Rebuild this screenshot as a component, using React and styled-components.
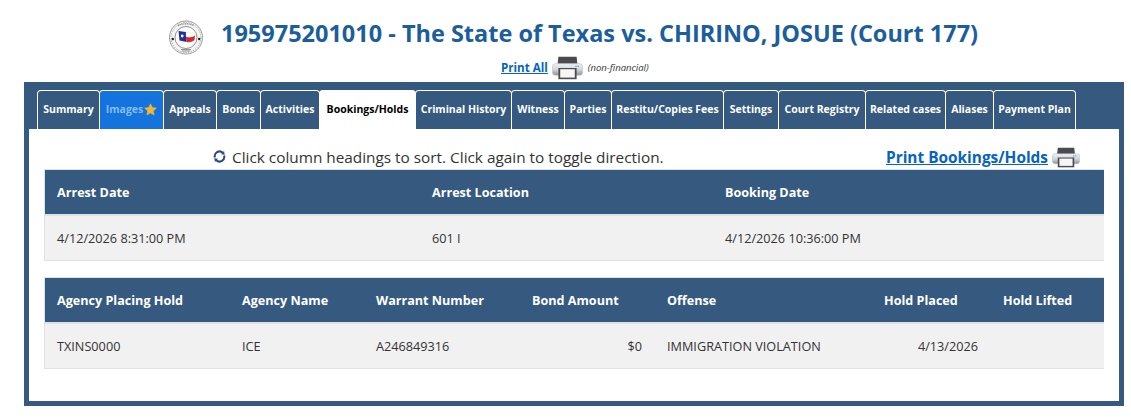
import styled, { createGlobalStyle } from "styled-components";

const GlobalStyle = createGlobalStyle`
    html, body {
        margin: 0;
        padding: 0;
        background: #fff;
        font-family: "Open Sans", "Noto Sans", "Liberation Sans", sans-serif;
    }
`;

const Page = styled.div`
    width: 1131px;
    height: 419px;
    overflow: hidden;
    padding: 0 7px 0 24px;
    box-sizing: border-box;
`;

const Header = styled.header`
    height: 53px;
    padding-top: 16px;
    box-sizing: border-box;
    display: flex;
    align-items: center;
    padding-left: 145px;
    gap: 18px;
`;

const SealBox = styled.div`
    margin-top: 5px;
    display: flex;
`;

const Title = styled.h1`
    margin: 0 0 3px;
    font-size: 23.49px;
    font-weight: 700;
    line-height: 34px;
    color: #1b5e9b;
    white-space: nowrap;
`;

const PrintAllRow = styled.div`
    height: 29px;
    display: flex;
    align-items: center;
    padding-left: 477px;
    gap: 4px;
`;

const PrintLink = styled.a`
    color: #0563c1;
    font-weight: 700;
    font-size: ${props => props.size || 11.6}px;
    text-decoration: underline;
    white-space: nowrap;
`;

const Note = styled.span`
    font-size: 9.5px;
    font-style: italic;
    color: #333;
    margin-left: 1px;
`;

const Panel = styled.main`
    height: 324px;
    background: #35597f;
    border: solid #35597f;
    border-width: 8px 5px 5px;
    box-sizing: border-box;
    display: flex;
    flex-direction: column;
`;

const TabBar = styled.nav`
    display: flex;
    height: 39px;
    padding-left: 8px;
    flex-shrink: 0;
`;

const Tab = styled.div`
    width: ${props => props.width + 1}px;
    margin-right: -1px;
    height: 39px;
    padding-bottom: 2px;
    box-sizing: border-box;
    display: flex;
    align-items: center;
    justify-content: center;
    gap: 1px;
    font-size: 10.5px;
    font-weight: 700;
    white-space: nowrap;
    border-radius: 4px 4px 0 0;
    border: 1px solid #fff;
    border-bottom: 0;
    background: ${props => props.active ? "#fff" : props.highlight ? "#1573dd" : "#35597f"};
    color: ${props => props.active ? "#000" : props.highlight ? "#84bdf0" : "#fff"};
`;

const Content = styled.section`
    flex: 1;
    background: #fff;
    padding: 0 15px;
`;

const InfoRow = styled.div`
    height: 40px;
    display: flex;
    align-items: center;
    padding-top: 15px;
    box-sizing: border-box;
`;

const SortHint = styled.div`
    display: flex;
    align-items: center;
    gap: 6px;
    margin-left: 169px;
    font-size: 15.35px;
    color: #333;
    white-space: nowrap;
`;

const PrintSection = styled.div`
    margin-left: auto;
    margin-right: 24px;
    margin-top: 1px;
    display: flex;
    align-items: center;
    gap: 4px;
`;

const Table = styled.table`
    width: 1060px;
    table-layout: fixed;
    border-collapse: collapse;
    margin-bottom: 16px;
`;

const HeadCell = styled.th`
    height: 44px;
    padding: 0 0 0 13px;
    background: #35597f;
    color: #fff;
    font-size: 12.6px;
    font-weight: 700;
    text-align: left;
    border-top: 1px solid #dee2e6;
    border-bottom: 2px solid #dee2e6;
    white-space: nowrap;

    &:first-child {
        box-shadow: inset 1px 0 0 #dee2e6;
    }
`;

const Cell = styled.td`
    height: 44px;
    padding: ${props => props.right ? "0 12px 0 0" : "0 0 0 13px"};
    background: #f1f1f1;
    color: #333;
    font-size: 12.7px;
    text-align: ${props => props.right ? "right" : "left"};
    border-bottom: 1px solid #dee2e6;
    white-space: nowrap;

    &:first-child {
        box-shadow: inset 1px 0 0 #dee2e6;
    }
`;

const tabs = [
    { label: "Summary", width: 62 },
    { label: "Images", width: 64, highlight: true, star: true },
    { label: "Appeals", width: 53 },
    { label: "Bonds", width: 44 },
    { label: "Activities", width: 59 },
    { label: "Bookings/Holds", width: 96, active: true },
    { label: "Criminal History", width: 96 },
    { label: "Witness", width: 53 },
    { label: "Parties", width: 47 },
    { label: "Restitu/Copies Fees", width: 112 },
    { label: "Settings", width: 55 },
    { label: "Court Registry", width: 87 },
    { label: "Related cases", width: 80 },
    { label: "Aliases", width: 48 },
    { label: "Payment Plan", width: 82 },
];

function Seal() {
    return (
        <svg width="34" height="35" viewBox="0 0 34 35">
            <circle cx="17" cy="17.5" r="16.5" fill="#fff" stroke="#9a9a9a" strokeWidth="1" />
            <circle cx="17" cy="17.5" r="15" fill="#f3f3f3" stroke="#777" strokeWidth="0.6" strokeDasharray="1.5 1" />
            <circle cx="17" cy="17.5" r="11" fill="#fff" stroke="#666" strokeWidth="0.7" />
            <circle cx="3.8" cy="19" r="1.2" fill="#222" />
            <circle cx="30.2" cy="19" r="1.2" fill="#222" />
            <path d="M9.5 11 L17 12 L17.5 22 L10.5 20.5 Z" fill="#1f2f9e" />
            <path d="M17 16.5 C20 18 23 17 26 15.5 L25.5 20 C23 22 20 22.5 17.5 22 Z" fill="#d9262c" />
            <path d="M17 12 C20 13.5 23 13 26 11.5 L26 15.5 C23 17 20 18 17 16.5 Z" fill="#fff" stroke="#ccc" strokeWidth="0.3" />
            <circle cx="13.2" cy="16" r="1.4" fill="#fff" />
            <path d="M12 29.5 h10 M13 31 h8" stroke="#777" strokeWidth="0.8" />
            <path d="M9 5.6 Q17 2 25 5.6" fill="none" stroke="#888" strokeWidth="1.2" strokeDasharray="1.2 0.6" />
        </svg>
    );
}

function PrinterIcon({ width, height, id }) {
    return (
        <svg width={width} height={height} viewBox="0 0 34 30" preserveAspectRatio="none">
            <defs>
                <linearGradient id={id} x1="0" y1="0" x2="0" y2="1">
                    <stop offset="0" stopColor="#eef1f3" />
                    <stop offset="0.5" stopColor="#d3d7db" />
                    <stop offset="1" stopColor="#8e9499" />
                </linearGradient>
            </defs>
            <path d="M7 1 h20 l1 11 H6 Z" fill="#4b4a50" />
            <rect x="0.5" y="9.5" width="33" height="14.5" rx="3.5" fill={`url(#${id})`} stroke="#b4b9bd" strokeWidth="0.6" />
            <rect x="28" y="12" width="1.6" height="1.6" fill="#5aa7d8" />
            <rect x="25.5" y="12" width="1.6" height="1.6" fill="#5aa7d8" />
            <rect x="7" y="15" width="20" height="14" fill="#4a4c50" />
            <rect x="9" y="16.5" width="16" height="10.5" fill="#f6f6f6" />
        </svg>
    );
}

function Star() {
    return (
        <svg width="13" height="13" viewBox="0 0 24 24">
            <path d="M12 1.5 l3.3 6.9 7.5 1 -5.5 5.2 1.4 7.5 L12 18.5 5.3 22.1 l1.4-7.5 -5.5-5.2 7.5-1 Z" fill="#f2b632" stroke="#f2b632" strokeLinejoin="round" />
        </svg>
    );
}

function SortIcon() {
    return (
        <svg width="13" height="13" viewBox="0 0 14 14" fill="none" stroke="#2c4a7c" strokeWidth="2.2">
            <path d="M2 8 A5.2 5.2 0 0 1 10.5 2.9" />
            <path d="M12 6 A5.2 5.2 0 0 1 3.5 11.1" />
            <path d="M8.6 4.6 L12.6 5 L11.9 1 Z" fill="#2c4a7c" stroke="none" />
            <path d="M5.4 9.4 L1.4 9 L2.1 13 Z" fill="#2c4a7c" stroke="none" />
        </svg>
    );
}

export default function App() {
    return (
        <>
            <GlobalStyle />
            <Page>
                <Header>
                    <SealBox>
                        <Seal />
                    </SealBox>
                    <Title>195975201010 - The State of Texas vs. CHIRINO, JOSUE (Court 177)</Title>
                </Header>
                <PrintAllRow>
                    <PrintLink>Print All</PrintLink>
                    <PrinterIcon width={31} height={24} id="printerBodyAll" />
                    <Note>(non-financial)</Note>
                </PrintAllRow>
                <Panel>
                    <TabBar>
                        {tabs.map(tab => (
                            <Tab key={tab.label} width={tab.width} active={tab.active} highlight={tab.highlight}>
                                {tab.label}
                                {tab.star && <Star />}
                            </Tab>
                        ))}
                    </TabBar>
                    <Content>
                        <InfoRow>
                            <SortHint>
                                <SortIcon />
                                Click column headings to sort. Click again to toggle direction.
                            </SortHint>
                            <PrintSection>
                                <PrintLink size={15.4}>Print Bookings/Holds</PrintLink>
                                <PrinterIcon width={28} height={21} id="printerBodyBookings" />
                            </PrintSection>
                        </InfoRow>
                        <Table>
                            <colgroup>
                                <col width="375" />
                                <col width="293" />
                                <col width="392" />
                            </colgroup>
                            <thead>
                                <tr>
                                    <HeadCell>Arrest Date</HeadCell>
                                    <HeadCell>Arrest Location</HeadCell>
                                    <HeadCell>Booking Date</HeadCell>
                                </tr>
                            </thead>
                            <tbody>
                                <tr>
                                    <Cell>4/12/2026 8:31:00 PM</Cell>
                                    <Cell>601 I</Cell>
                                    <Cell>4/12/2026 10:36:00 PM</Cell>
                                </tr>
                            </tbody>
                        </Table>
                        <Table>
                            <colgroup>
                                <col width="185" />
                                <col width="134" />
                                <col width="156" />
                                <col width="135" />
                                <col width="217" />
                                <col width="119" />
                                <col width="114" />
                            </colgroup>
                            <thead>
                                <tr>
                                    <HeadCell>Agency Placing Hold</HeadCell>
                                    <HeadCell>Agency Name</HeadCell>
                                    <HeadCell>Warrant Number</HeadCell>
                                    <HeadCell>Bond Amount</HeadCell>
                                    <HeadCell>Offense</HeadCell>
                                    <HeadCell>Hold Placed</HeadCell>
                                    <HeadCell>Hold Lifted</HeadCell>
                                </tr>
                            </thead>
                            <tbody>
                                <tr>
                                    <Cell>TXINS0000</Cell>
                                    <Cell>ICE</Cell>
                                    <Cell>A246849316</Cell>
                                    <Cell right>$0</Cell>
                                    <Cell>IMMIGRATION VIOLATION</Cell>
                                    <Cell right>4/13/2026</Cell>
                                    <Cell />
                                </tr>
                            </tbody>
                        </Table>
                    </Content>
                </Panel>
            </Page>
        </>
    );
}
